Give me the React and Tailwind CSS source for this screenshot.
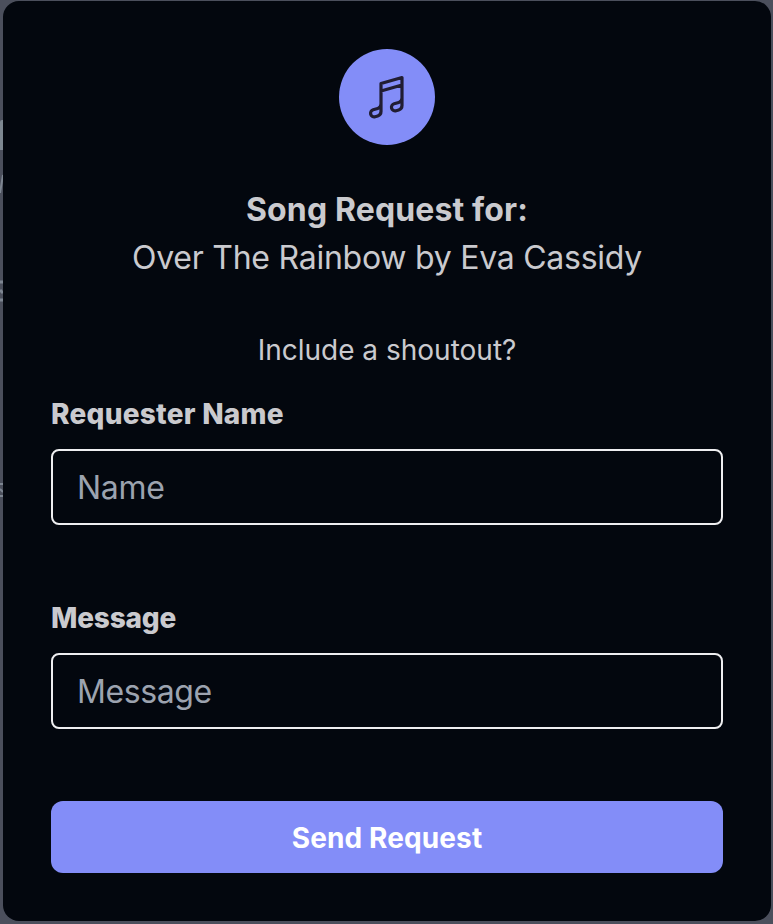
export default function App() {
  return (
    <div className="relative flex h-[924px] w-[773px] overflow-hidden bg-[#4b4f5c] pt-px pl-[3px] font-['Inter',sans-serif] text-[#cacace]">
      {/* Dimmed page content that shows past the dialog's left edge */}
      <div aria-hidden="true" className="absolute inset-y-0 left-0 w-[3px] text-[#7d8591]">
        <div className="absolute top-[120px] left-0 h-[30px] w-[3px] rounded-tl-[2px] bg-[#7d8791]" />
        <svg className="absolute top-[173px] left-0 h-[20px] w-[3px]" viewBox="0 0 3 20" fill="none" stroke="currentColor" strokeWidth="2">
          <path d="M0 20 3 2" />
        </svg>
        <svg className="absolute top-[280px] left-0 h-[22px] w-[3px]" viewBox="0 0 3 22" fill="none" stroke="currentColor" strokeWidth="3">
          <path d="M0 2h3M0 10 3 13M0 20h3" />
        </svg>
        <svg className="absolute top-[482px] left-0 h-[16px] w-[3px]" viewBox="0 0 3 16" fill="none" stroke="currentColor" strokeWidth="2">
          <path d="M0 2h3M0 7 3 10M0 14h3" />
        </svg>
      </div>
      <main className="relative flex h-[920px] w-[768px] flex-col items-center rounded-[16px] bg-[#03070e] px-12 pt-12">
        <div className="flex h-24 w-24 shrink-0 items-center justify-center rounded-full bg-[#838df8] text-[#211d32]">
          <svg className="h-12 w-12" viewBox="0 0 24 24" fill="none" stroke="currentColor" strokeWidth="1.6" strokeLinecap="round" strokeLinejoin="round">
            <path d="m9 9 10.5-3m0 6.553v3.75a2.25 2.25 0 0 1-1.632 2.163l-1.32.377a1.803 1.803 0 1 1-.99-3.467l2.31-.66a2.25 2.25 0 0 0 1.632-2.163Zm0 0V2.25L9 5.25v10.303m0 0v3.75a2.25 2.25 0 0 1-1.632 2.163l-1.32.377a1.803 1.803 0 0 1-.99-3.467l2.31-.66A2.25 2.25 0 0 0 9 15.553Z" />
          </svg>
        </div>
        <h1 className="mt-[41px] text-[32px] leading-[48px] font-bold tracking-[0.13px]">Song Request for:</h1>
        <p className="text-[32px] leading-[48px] tracking-[-0.25px]">Over The Rainbow by Eva Cassidy</p>
        <p className="mt-12 text-[28px] leading-[40px]">Include a shoutout?</p>
        <form className="flex w-full flex-col">
          <label htmlFor="requester" className="mt-6 text-[28px] leading-[40px] font-extrabold tracking-[0.25px]">Requester Name</label>
          <input id="requester" className="mt-[15px] h-[76px] rounded-lg border-2 border-[#eeeef0] px-6 text-[32px] tracking-[-0.25px] placeholder:text-[#9ca3af]" placeholder="Name" />
          <label htmlFor="message" className="mt-[73px] text-[28px] leading-[40px] font-extrabold tracking-[-0.2px]">Message</label>
          <input id="message" className="mt-[15px] h-[76px] rounded-lg border-2 border-[#eeeef0] px-6 text-[32px] tracking-[-0.4px] placeholder:text-[#9ca3af]" placeholder="Message" />
          <button type="button" className="mt-[72px] h-[72px] rounded-xl bg-[#838df8] pt-px text-[28px] font-bold tracking-[0.12px] text-white">Send Request</button>
        </form>
      </main>
    </div>
  );
}
